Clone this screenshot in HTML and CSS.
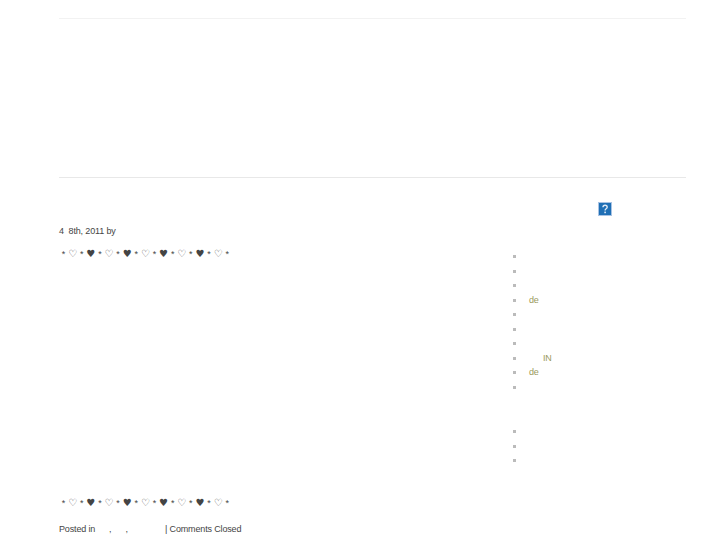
FILE: index.html
```html
<!DOCTYPE html>
<html lang="en">
<head>
    <meta charset="UTF-8">
    <meta name="viewport" content="width=device-width, initial-scale=1.0">
    <title>Post</title>
    <link rel="stylesheet" href="styles.css">
</head>
<body>
    <div class="wrapper">
        <div class="banner"></div>
        <div class="columns">
            <div class="post">
                <p class="meta">4&nbsp; 8th, 2011 by</p>
                <p class="hearts"><span>*</span><span class="h">♡</span><span>*</span><span class="h">♥</span><span>*</span><span class="h">♡</span><span>*</span><span class="h">♥</span><span>*</span><span class="h">♡</span><span>*</span><span class="h">♥</span><span>*</span><span class="h">♡</span><span>*</span><span class="h">♥</span><span>*</span><span class="h">♡</span><span>*</span></p>
                <div class="post-body"></div>
                <p class="hearts"><span>*</span><span class="h">♡</span><span>*</span><span class="h">♥</span><span>*</span><span class="h">♡</span><span>*</span><span class="h">♥</span><span>*</span><span class="h">♡</span><span>*</span><span class="h">♥</span><span>*</span><span class="h">♡</span><span>*</span><span class="h">♥</span><span>*</span><span class="h">♡</span><span>*</span></p>
                <p class="posted"><span class="posted-in">Posted in</span><span class="cats">, &nbsp; &nbsp; &nbsp;,</span>| Comments Closed</p>
            </div>
            <div class="sidebar">
                <div class="help-row">
                    <svg class="help" width="14" height="14" viewBox="0 0 14 14">
                        <rect x="0.5" y="0.5" width="13" height="13" fill="#1f6fb5" stroke="#a9c3e3"/>
                        <path d="M5 5.2c0-2.6 4.2-2.6 4.2 0 0 1.6-2.1 1.6-2.1 3.2" fill="none" stroke="#dfe9f5" stroke-width="1.4"/>
                        <rect x="6.3" y="9.6" width="1.6" height="1.6" fill="#dfe9f5"/>
                    </svg>
                </div>
                <ul class="links">
                    <li></li>
                    <li></li>
                    <li></li>
                    <li><a href="#">de</a></li>
                    <li></li>
                    <li></li>
                    <li></li>
                    <li><a class="indent" href="#">IN</a></li>
                    <li><a href="#">de</a></li>
                    <li></li>
                </ul>
                <ul class="links links-second">
                    <li></li>
                    <li></li>
                    <li></li>
                </ul>
            </div>
        </div>
    </div>
</body>
</html>
```

FILE: styles.css
```css
* { margin: 0; padding: 0; box-sizing: border-box; }

body {
    font-family: "Liberation Sans", Arial, sans-serif;
    font-size: 9px;
    letter-spacing: -0.15px;
    color: #444;
    background: #fff;
}

.wrapper {
    width: 627px;
    margin-left: 59px;
    padding-top: 18px;
}

/* empty header area between the two rules */
.banner {
    height: 160px;
    border-top: 1px solid #f2f2f2;
    border-bottom: 1px solid #e8e8e8;
    margin-bottom: -1px;
}

.columns {
    display: flex;
}

.post {
    width: 454px;
    padding-top: 48px;
}

.meta {
    line-height: 13px;
}

/* row of asterisks and hearts, one cell each */
.hearts {
    display: flex;
    align-items: center;
    height: 12px;
    margin-top: 10px;
    line-height: 12px;
    letter-spacing: 0;
}

.hearts span {
    width: 9.1px;
    text-align: center;
}

.hearts .h {
    font-family: "DejaVu Sans", sans-serif;
    font-size: 10px;
}

.post-body {
    height: 227px;
}

.posted {
    margin-top: 14px;
    line-height: 12px;
    display: flex;
}

.posted-in { width: 50px; }
.cats { width: 56px; }

.sidebar {
    flex: 1;
}

.help-row {
    padding: 25px 0 0 85px;
    height: 72px;
}

.help { display: block; }

.links {
    list-style: none;
}

.links li {
    display: flex;
    align-items: center;
    height: 14.5px;
    padding-left: 16px;
    position: relative;
    line-height: 14.5px;
}

.links li::before {
    content: "";
    position: absolute;
    left: 0;
    top: 6px;
    width: 3px;
    height: 3px;
    background: #bbb;
}

.links a {
    color: #9a9a5c;
    text-decoration: none;
}

.links a.indent { margin-left: 14px; }

.links-second {
    margin-top: 30px;
}
```
